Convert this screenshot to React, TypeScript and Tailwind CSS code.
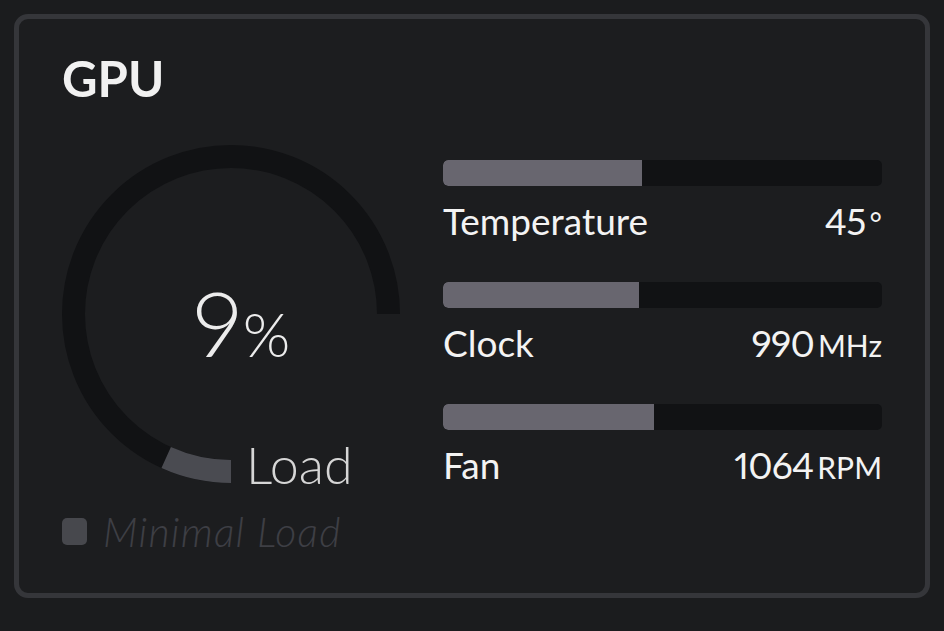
import React from "react";

const R = 157.5;
const C = 169;
const pct = 9;

function pointAt(deg: number) {
  // deg measured clockwise (screen) from 6 o'clock
  const a = (deg * Math.PI) / 180;
  return { x: C - R * Math.sin(a), y: C + R * Math.cos(a) };
}

function Gauge() {
  const end = pointAt(270);
  const fillEnd = pointAt((270 * pct) / 100);
  return (
    <div className="relative w-[338px] h-[338px] shrink-0">
      <svg width="338" height="338" viewBox="0 0 338 338" className="block">
        <path
          d={`M ${C} ${C + R} A ${R} ${R} 0 1 1 ${end.x} ${end.y}`}
          fill="none"
          stroke="#111214"
          strokeWidth="23"
        />
        <path
          d={`M ${C} ${C + R} A ${R} ${R} 0 0 1 ${fillEnd.x} ${fillEnd.y}`}
          fill="none"
          stroke="#4a4b51"
          strokeWidth="23"
        />
      </svg>
      <div className="absolute left-[129px] top-[131px] flex items-baseline leading-none text-[#ececec] font-light">
        <span className="text-[91px] leading-none">9</span>
        <span className="text-[61px] leading-none font-light -ml-[1px]">%</span>
      </div>
      <div className="absolute left-[184px] top-[293px] text-[52px] leading-none font-light text-[#d6d6d6]">
        Load
      </div>
    </div>
  );
}

function Stat({
  label,
  value,
  unit,
  fill,
}: {
  label: string;
  value: string;
  unit: string;
  fill: number;
}) {
  return (
    <div className="flex flex-col">
      <div className="h-[26px] w-full rounded-[5px] bg-[#111214] overflow-hidden">
        <div className="h-full rounded-l-[5px] bg-[#68666f]" style={{ width: `${fill}%` }} />
      </div>
      <div className="mt-[16px] flex items-baseline justify-between leading-none text-[#f3f3f3]">
        <span className="text-[37px] leading-none">{label}</span>
        <span className="flex items-baseline leading-none">
          <span className="text-[37px] leading-none proportional-nums tracking-[-0.02em]">{value}</span>
          <span className="text-[30px] leading-none ml-[4px]">{unit}</span>
        </span>
      </div>
    </div>
  );
}

export default function App() {
  return (
    <div
      className="w-[944px] h-[631px] bg-[#1b1c1e] pt-[14px] pl-[14px]"
      style={{ fontFamily: "Lato, 'Open Sans', sans-serif" }}
    >
      <div className="w-[916px] h-[584px] rounded-[14px] border-[5px] border-[#35363a] bg-[#1c1d1f] px-[43px] pt-[34px]">
        <div className="text-[49px] leading-none font-bold text-[#f1f1f1] h-[51px] pt-[1px]">GPU</div>
        <div className="mt-[41px] flex gap-[43px]">
          <div className="flex flex-col">
            <Gauge />
            <div className="mt-[28px] flex items-center gap-[16px]">
              <div className="w-[25px] h-[27px] rounded-[5px] bg-[#47484d]" />
              <span className="text-[41px] leading-none font-light italic tracking-[0.03em] text-[#3e3f45]">
                Minimal Load
              </span>
            </div>
          </div>
          <div className="flex-1 pt-[15px] flex flex-col gap-[43px]">
            <Stat label="Temperature" value="45" unit="°" fill={45.3} />
            <Stat label="Clock" value="990" unit="MHz" fill={44.6} />
            <Stat label="Fan" value="1064" unit="RPM" fill={48} />
          </div>
        </div>
      </div>
    </div>
  );
}
